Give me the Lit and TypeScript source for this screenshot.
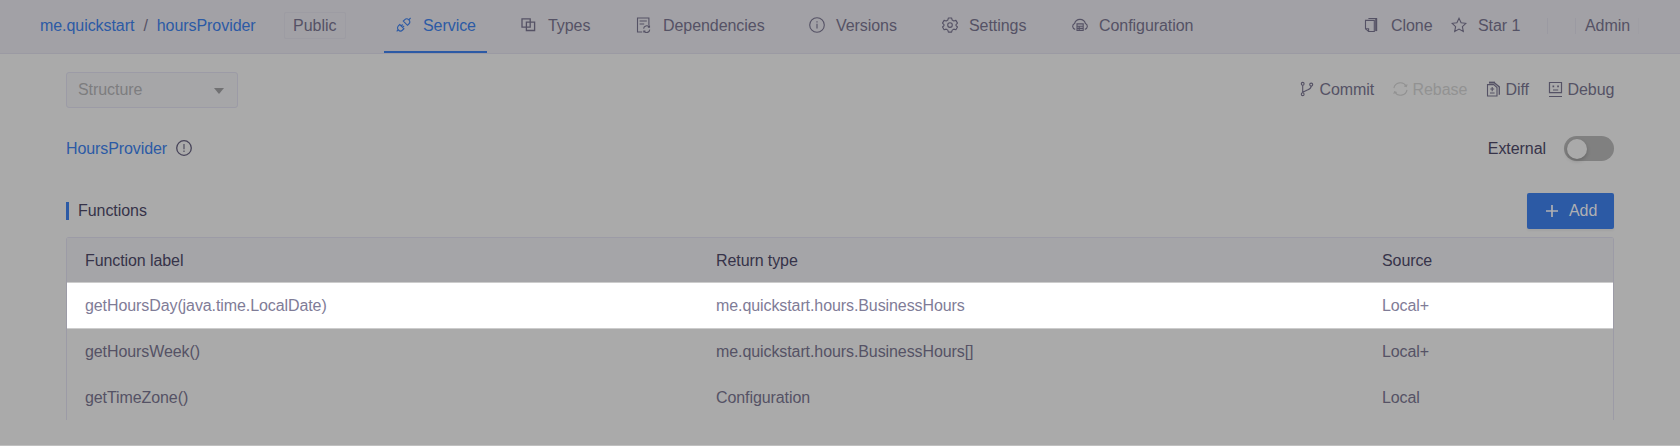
import { LitElement, html, svg, css } from "lit";
import { customElement, property } from "lit/decorators.js";

const icons: Record<string, any> = {
  service: svg`<path d="M.7 14.3 2.3 12.7M12.8 2.8 14.6 1"/><path d="M3.7 7.5 7.9 11.7 6.6 13a2.9 2.9 0 0 1-4.2-4.2zM7.3 4.1 11.5 8.3 12.8 7a2.9 2.9 0 0 0-4.2-4.2zM5.2 9 6.7 7.5M6.6 10.4 8.1 8.9"/>`,
  types: svg`<path d="M1 1.8h8.2v8.4H1zM5.4 5.2h8.2v8.3H5.4z" stroke-width="1.3"/>`,
  deps: svg`<path d="M6.2 15H1.5V1h11.4v7.4M3.6 4h7.2M3.6 7h4.6" /><path d="M7.6 11.6a3.1 3.1 0 0 1 5.5-1.6M13.7 12.6a3.1 3.1 0 0 1-5.5 1.8M13.5 8.6v1.7h-1.6M7.8 15.6v-1.5h1.6"/>`,
  info: svg`<circle cx="8" cy="8" r="7.3"/><path d="M8 6.8v4.8M8 4.2v1.4"/>`,
  gear: svg`<path d="M6.4 1h3.2l.6 2.1 1.6.9 2.1-.6 1.6 2.7L14 7.6v1l1.5 1.4-1.6 2.7-2.1-.6-1.6 1-.6 2H6.4l-.6-2-1.6-1-2.1.6L.5 10 2 8.6v-1L.5 6.1l1.6-2.7 2.1.6 1.6-.9z" stroke-linejoin="round"/><circle cx="8" cy="8.1" r="2.3"/>`,
  cloud: svg`<path d="M3.2 12.4A3.1 3.1 0 0 1 2.6 6.5 5.6 5.6 0 0 1 13.4 6.5 3.1 3.1 0 0 1 12.8 12.4"/><path d="M5 6.9h6.2v6.5H5zM5 9.2h6.2M5 11.4h6.2M7.2 9v4.2"/>`,
  clone: svg`<path d="M1.5 3.4h8.8v11.1H4.6L1.5 11.8z"/><path d="M4.4 1.5h8v12.2M4.6 14.4v-2.6H1.6"/><path d="M12.2 1.2v12.9" stroke-width="2"/>`,
  star: svg`<path d="m8 1.3 2.1 4.4 4.8.6-3.5 3.3.9 4.8L8 12.1l-4.3 2.3.9-4.8L1.1 6.3l4.8-.6z"/>`,
  commit: svg`<circle cx="2.7" cy="2.8" r="1.4"/><circle cx="2.7" cy="13.2" r="1.4"/><circle cx="11.2" cy="3.6" r="1.5"/><path d="M2.7 4.2v7.6M11.2 5.1c0 3-1.6 3-4.4 4.1l-4.1 2"/>`,
  rebase: svg`<path d="M.9 7.2A6.6 6.6 0 0 1 13.1 5M14 8.8A6.6 6.6 0 0 1 1.8 11M14.1 3.4 13.3 5.6 11.2 4.9M.8 12.9 1.6 10.6 3.7 11.4"/>`,
  diff: svg`<path d="M1.5 3.6h6.3L11 6.6V15H1.5z"/><path d="M3 1.6h6" stroke-width="1.9"/><path d="M8.6 1.9 13.3 5.9v7.8" stroke-width="1.3"/><path d="M6.2 5.9v4.4M4.3 8h3.9M4 12h4.6"/>`,
  debug: svg`<path d="M1.5 1.5h12v10.2h-12zM1 15.5h13M5 9h5.2" stroke-width="1.2"/><path d="M4.5 5.4h1.7M9.2 5.4h1.7" stroke-width="1.8"/>`,
  warn: svg`<circle cx="8" cy="8" r="7.3" stroke-width="1.3"/><path d="M8 4v5.2M8 10.5v1.5"/>`,
  plus: svg`<path d="M8 2v12M2 8h12" stroke-width="1.7"/>`,
};

@customElement("ui-icon")
class UiIcon extends LitElement {
  @property() name = "";
  static styles = css`
    :host { display: block; width: 16px; height: 16px; flex: none; }
    svg { display: block; fill: none; stroke: currentColor; stroke-width: 1.1; }
  `;
  render() {
    return html`<svg width="16" height="16" viewBox="0 0 16 16">${icons[this.name]}</svg>`;
  }
}

@customElement("app-root")
class AppRoot extends LitElement {
  static styles = css`
    :host {
      display: block; height: 446px; overflow: hidden; background: #aaa; color: #555265;
      font: 16px/20px "Liberation Sans", Arial, sans-serif; letter-spacing: -0.06px; white-space: nowrap;
    }
    * { box-sizing: border-box; }
    header {
      height: 54px; background: #a2a1a6; border-bottom: 1px solid #9b9aa3;
      display: flex; align-items: stretch; padding-left: 40px;
    }
    .crumbs { width: 244px; display: flex; align-items: center; gap: 8px; color: #2c5aa5; padding-bottom: 1px; }
    .slash { color: #555265; padding: 0 1px; }
    .pill { width: 62px; height: 27px; margin: 12px 38px 0 0; border: 1px solid #9d9ca3; border-radius: 2px; padding: 3px 8px; letter-spacing: 0; }
    .tabs { display: grid; grid-template-columns: 125px 115px 173px 133px 130px 120px; width: 981px; }
    .tab { display: flex; gap: 11px; padding: 16px 12px 0; height: 53px; justify-self: start; }
    .tab ui-icon { margin-top: 1px; }
    .active { color: #2c5aa5; border-bottom: 2px solid #2c5aa5; width: 103px; }
    .actions { display: grid; grid-template-columns: 87px 96px 28px 64px; padding-top: 16px; margin-left: -1px; }
    .action { display: flex; gap: 11px; }
    .action ui-icon { margin-top: 1px; }
    .rule { height: 16px; border-left: 1px solid #9b9aa2; margin-top: 2px; }
    .admin { height: 16px; border-left: 1px solid #9b9aa2; border-right: 1px solid #9f9ea4; margin-top: 2px; padding-left: 9px; line-height: 16px; }
    main { padding: 18px 66px 0; }
    .row { display: flex; justify-content: space-between; }
    .select {
      width: 172px; height: 36px; border: 1px solid #9c9ba6; border-radius: 3px; background: #a6a6a8; color: #7d7d7f;
      display: flex; align-items: center; justify-content: space-between; padding: 0 13px 0 11px;
    }
    .caret { border: 5px solid transparent; border-top: 6px solid #717173; border-bottom: 0; margin-top: 1px; }
    .tools { display: grid; grid-template-columns: 93px 93px 62px 66px; padding-top: 8px; }
    .tool { display: flex; gap: 3.5px; }
    .tool ui-icon { margin-top: 1px; }
    .off { color: #929292; }
    .title { height: 25px; margin-top: 28px; align-items: center; }
    .name { display: flex; gap: 9px; color: #2c5aa5; letter-spacing: -0.09px; }
    .name ui-icon { color: #48455a; margin-top: 1px; }
    .ext { display: flex; align-items: center; gap: 18px; color: #363349; }
    .switch { width: 50px; height: 25px; border-radius: 13px; background: #808080; padding: 3px; }
    .knob { width: 20px; height: 20px; border-radius: 50%; background: #aaa; box-shadow: 0 2px 4px #0003; }
    .functions { margin-top: 32px; height: 36px; align-items: center; color: #363349; }
    .label { border-left: 3px solid #2c5aa5; height: 18px; line-height: 17px; padding-left: 9px; }
    .add {
      width: 87px; height: 36px; background: #2c5aa5; color: #b0b0b2; border-radius: 2px;
      display: flex; align-items: center; gap: 9px; padding: 0 17px; box-shadow: 0 2px 2px #0000000b;
    }
    .table { margin-top: 8px; border: 1px solid #9c9ba6; border-bottom: 0; border-radius: 3px 3px 0 0; height: 183px; letter-spacing: -0.09px; }
    .line { display: grid; grid-template-columns: 631px 666px 1fr; height: 46px; padding: 13px 0 0 18px; }
    .head { height: 45px; background: #a5a5a8; color: #363349; border-bottom: 1px solid #ccc; padding-top: 12.5px; }
    .lit { background: #fff; color: #7f7c97; border-bottom: 1px solid #ccc; }
    .foot { height: 1px; margin-top: 25px; background: #c0c0c0; }
  `;
  tabs = [["service", "Service"], ["types", "Types"], ["deps", "Dependencies"], ["info", "Versions"], ["gear", "Settings"], ["cloud", "Configuration"]];
  tools = [["commit", "Commit"], ["rebase", "Rebase"], ["diff", "Diff"], ["debug", "Debug"]];
  rows = [
    ["Function label", "Return type", "Source"],
    ["getHoursDay(java.time.LocalDate)", "me.quickstart.hours.BusinessHours", "Local+"],
    ["getHoursWeek()", "me.quickstart.hours.BusinessHours[]", "Local+"],
    ["getTimeZone()", "Configuration", "Local"],
  ];
  render() {
    return html`
      <header>
        <div class="crumbs"><span>me.quickstart</span><span class="slash">/</span><span>hoursProvider</span></div>
        <div class="pill">Public</div>
        <nav class="tabs">${this.tabs.map(([i, t], n) => html`<div class="tab ${n ? "" : "active"}"><ui-icon name=${i}></ui-icon><span>${t}</span></div>`)}</nav>
        <div class="actions">
          <div class="action"><ui-icon name="clone"></ui-icon><span>Clone</span></div>
          <div class="action"><ui-icon name="star"></ui-icon><span>Star 1</span></div>
          <div class="rule"></div><div class="admin">Admin</div>
        </div>
      </header>
      <main>
        <div class="row">
          <div class="select"><span>Structure</span><i class="caret"></i></div>
          <div class="tools">${this.tools.map(([i, t]) => html`<div class="tool ${i === "rebase" ? "off" : ""}"><ui-icon name=${i}></ui-icon><span>${t}</span></div>`)}</div>
        </div>
        <div class="row title">
          <div class="name"><span>HoursProvider</span><ui-icon name="warn"></ui-icon></div>
          <div class="ext"><span>External</span><div class="switch"><div class="knob"></div></div></div>
        </div>
        <div class="row functions">
          <div class="label">Functions</div>
          <div class="add"><ui-icon name="plus"></ui-icon><span>Add</span></div>
        </div>
        <div class="table">${this.rows.map((r, n) => html`<div class="line ${n === 0 ? "head" : n === 1 ? "lit" : ""}">${r.map((c) => html`<span>${c}</span>`)}</div>`)}</div>
      </main>
      <div class="foot"></div>
    `;
  }
}
